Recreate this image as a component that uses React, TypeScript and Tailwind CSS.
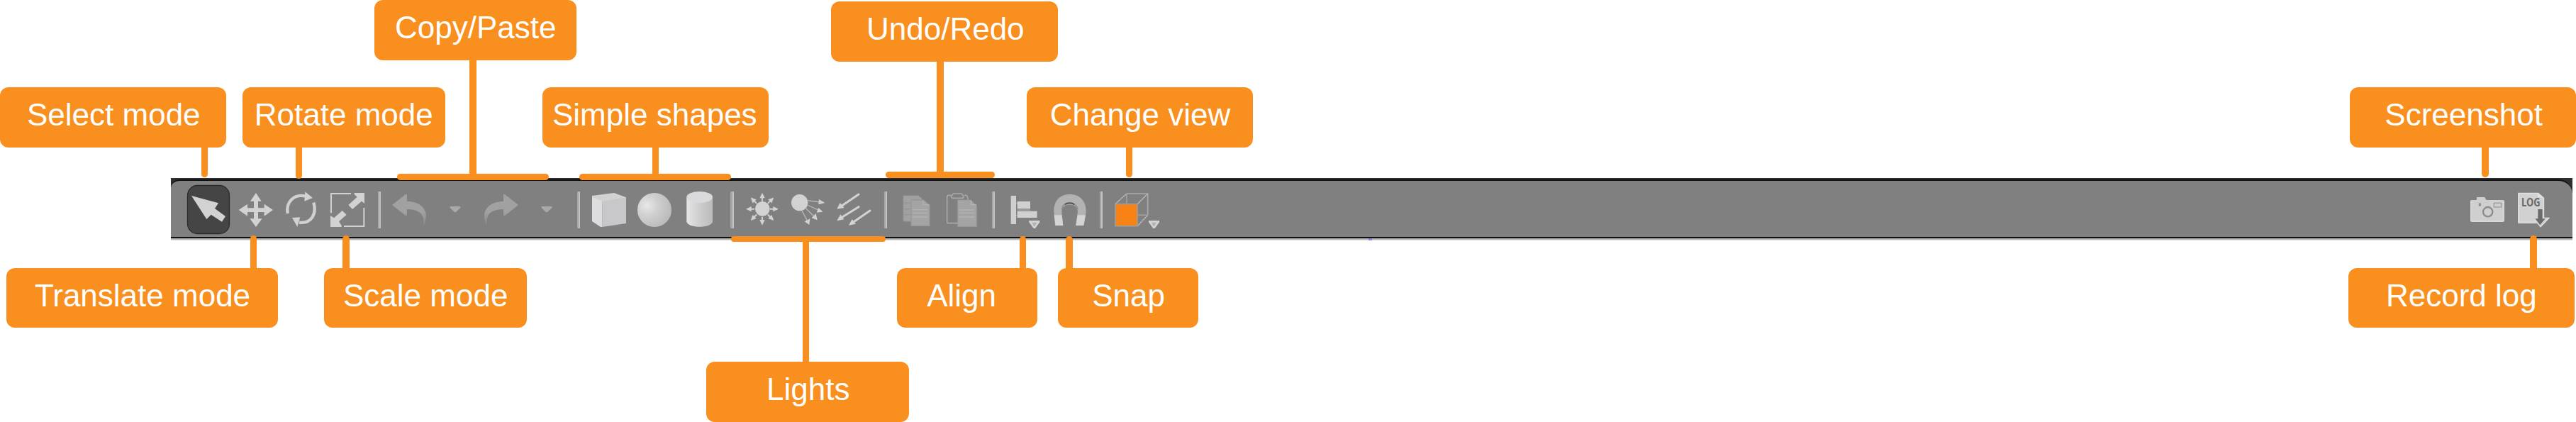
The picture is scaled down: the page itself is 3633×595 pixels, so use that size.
import type { ReactNode } from "react";

type IconProps = { box: string; className: string; children: ReactNode };

/* Every toolbar icon is drawn at three units per pixel, over the bar's full height. */
function Icon({ box, className, children }: IconProps) {
  return (
    <svg viewBox={box} className={`h-[79px] shrink-0 ${className}`} fill="none">
      {children}
    </svg>
  );
}

function Separator({ className }: { className: string }) {
  return <div className={`mt-[15px] h-[52px] shrink-0 border-l-2 border-[#a6a6a6] bg-[#c2c2c2] ${className}`} />;
}

function Caret({ className }: { className: string }) {
  return (
    <Icon box="342 60 48 237" className={`w-4 ${className}`}>
      <path d="M344 168H388V174L369 192H362L344 174Z" fill="#a9a9a9" />
    </Icon>
  );
}

function CornerArrow({ x = 0, y = 0 }: { x?: number; y?: number }) {
  return (
    <g transform={`translate(${x} ${y})`}>
      <path d="M0 0H45V7L26 33H19L0 7Z" fill="#d4d4d4" />
      <path d="M12 8H33L24 24H20Z" fill="#b2b2b2" />
    </g>
  );
}

const rays = [0, 45, 90, 135, 180, 225, 270, 315];

function Toolbar() {
  return (
    <div className="ml-[241px] w-[3387px]">
      <div className="bg-[#2c2e30] pt-[2px]">
        <div className="flex h-[83px] items-start rounded-tl-[12px] rounded-tr-[20px] border-y-2 border-[#111111] bg-[#808080] pl-[21px] pr-8">
          <Icon box="96 60 192 237" className="w-16">
            <rect x="103.500" y="79.500" width="177" height="204" rx="42" fill="#454545" stroke="#2b2b2b" strokeWidth="4" />
            <path d="M120 123L234 154L219 177L264 210L249 233L203 203L184 222Z" fill="#d2d2d2" />
          </Icon>
          <Icon box="318 60 150 237" className="ml-[10px] w-[50px]">
            <path
              d="M393 111L416 146H402V175H428V158L465 183L428 209V192H402V220H419L393 255L367 220H384V192H357V209L320 183L357 158V175H384V146H369Z"
              fill="#d2d2d2"
            />
          </Icon>
          <Icon box="510 60 144 237" className="ml-[14px] w-12">
            <path d="M527 198C519 150 552 114 604 125" stroke="#d0d0d0" strokeWidth="13" />
            <path d="M601 106L633 132L598 146Z" fill="#d2d2d2" />
            <path d="M637 152C650 198 630 242 576 236" stroke="#d0d0d0" strokeWidth="13" />
            <path d="M546 216L580 214L568 254Z" fill="#d2d2d2" />
          </Icon>
          <Icon box="702 60 156 237" className="ml-4 w-[52px]">
            <path d="M795 114H711V196M850 174V252H765" stroke="#d2d2d2" strokeWidth="6" />
            <path
              d="M708 255V207L723 217L758 186L776 203L744 232L755 249V255ZM852 111V156L840 146L801 180L784 162L821 128L809 117V111Z"
              fill="#d2d2d2"
            />
          </Icon>
          <Separator className="ml-[17px] w-1" />
          <Icon box="96 60 150 237" className="ml-[15px] w-[50px]">
            <defs>
              <linearGradient id="undoFade" x1="0" y1="0" x2="0" y2="1">
                <stop offset=".6" stopColor="#a1a1a1" />
                <stop offset="1" stopColor="#8b8b8b" />
              </linearGradient>
            </defs>
            <path d="M99 162L156 117H162V147C218 147 248 180 242 218L237 243H231C237 199 212 181 162 180V208H157Z" fill="url(#undoFade)" />
          </Icon>
          <Caret className="ml-8" />
          <Icon box="486 60 150 237" className="ml-8 w-[50px]">
            <path d="M633 162L576 117H570V147C514 147 484 180 490 218L495 243H500C495 199 520 181 570 180V208H575Z" fill="url(#undoFade)" />
          </Icon>
          <Caret className="ml-[31px]" />
          <Separator className="ml-[35px] w-1" />
          <Icon box="102 60 150 237" className="ml-4 w-[50px]">
            <path d="M105 123L198 111L249 130V138L148 151L105 132Z" fill="#d2d2d2" />
            <path d="M105 127L148 147V255H141L105 231Z" fill="#dddddf" />
            <path d="M148 146L249 130V240L148 255Z" fill="#c8c8ca" />
          </Icon>
          <Icon box="294 60 150 237" className="ml-[14px] w-[50px]">
            <defs>
              <radialGradient id="sphereShade" cx=".28" cy=".37" r=".68">
                <stop offset="0" stopColor="#e8e8e8" />
                <stop offset=".45" stopColor="#d0d0d0" />
                <stop offset="1" stopColor="#bdbdbd" />
              </radialGradient>
            </defs>
            <circle cx="369" cy="183" r="72" fill="url(#sphereShade)" />
          </Icon>
          <Icon box="501 60 117 237" className="ml-[19px] w-[39px]">
            <defs>
              <linearGradient id="cylinderShade">
                <stop offset="0" stopColor="#e6e6e6" />
                <stop offset=".6" stopColor="#c9c9c9" />
                <stop offset="1" stopColor="#bcbcbc" />
              </linearGradient>
            </defs>
            <path d="M505 130V232C508 262 612 262 615 232V130Z" fill="url(#cylinderShade)" />
            <ellipse cx="560" cy="129" rx="55" ry="24" fill="#dadadc" />
          </Icon>
          <Separator className="ml-6 w-[5px] border-l-3" />
          <Icon box="63 60 141 237" className="ml-4 w-[47px]">
            <circle cx="136" cy="178" r="31" fill="#d2d2d2" />
            {rays.map((a) => (
              <g key={a} transform={`translate(135 179) rotate(${a})`}>
                <path d="M0 -69L11 -46H3V-33H-3V-46H-11Z" fill="#d2d2d2" />
              </g>
            ))}
          </Icon>
          <Icon box="255 60 150 237" className="ml-[17px] w-[50px]">
            <circle cx="293" cy="152" r="35" fill="#d2d2d2" />
            <path d="M326 143L378 150M326 162L374 184M317 174L355 211M302 184L324 226" stroke="#b8b8b8" strokeWidth="4" />
            <path d="M375 138L400 153L373 160ZM373 174L392 191L365 194ZM362 198L368 226L344 217ZM337 220L334 246L314 232Z" fill="#d2d2d2" />
          </Icon>
          <Icon box="447 60 150 237" className="ml-[14px] w-[50px]">
            <path d="M543 117L469 167M543 170L469 216M591 186L520 235" stroke="#d2d2d2" strokeWidth="9" strokeLinecap="round" />
            <path d="M451 179L464 153L482 174ZM451 229L466 202L481 223ZM501 248L515 222L531 242Z" fill="#d2d2d2" />
          </Icon>
          <Separator className="ml-[18px] w-1" />
          <Icon box="729 60 120 237" className="ml-[22px] w-10">
            <path d="M732 123H795L810 135V231H732Z" fill="#a1a1a1" stroke="#969696" strokeWidth="3" />
            <path d="M736 154H760M736 179H760M736 203H760" stroke="#949494" strokeWidth="4" />
            <path d="M765 141H817L843 164V250H765Z" fill="#a4a4a4" stroke="#979797" strokeWidth="4" />
            <path d="M816 142V161H843" stroke="#b0b0b0" strokeWidth="4" />
            <path d="M770 182H835M770 196H835M770 213H835" stroke="#b2b2b2" strokeWidth="4" />
          </Icon>
          <Icon box="-18 60 135 237" className="ml-[21px] w-[45px]">
            <path d="M33 239H-7Q-13 239 -13 233V128Q-13 121 -7 121H4M61 121H67Q74 121 75 140" stroke="#a8a8a8" strokeWidth="5" />
            <path d="M14 114H48L58 125L54 133H8L4 125Z" stroke="#a8a8a8" strokeWidth="5" />
            <path d="M33 142H87L111 166V252H33Z" fill="#a4a4a4" stroke="#a0a0a0" strokeWidth="4" />
            <path d="M88 143V161H111" stroke="#b3b3b3" strokeWidth="4" />
            <path d="M38 183H103M38 196H103M38 213H103" stroke="#b3b3b3" strokeWidth="4" />
          </Icon>
          <Separator className="ml-5 w-1" />
          <Icon box="255 60 126 237" className="ml-[22px] w-[42px]">
            <rect x="257" y="123" width="22" height="120" fill="#cfcfcf" />
            <path d="M279 154H285M279 207H285M285 183H339" stroke="#a4a4a4" strokeWidth="5" />
            <rect x="284" y="147" width="55" height="31" fill="#d0d0d0" />
            <rect x="284" y="188" width="84" height="28" fill="#d0d0d0" />
            <CornerArrow x={334} y={228} />
          </Icon>
          <Icon box="435 60 144 237" className="ml-[18px] w-12">
            <path d="M444 249L439 190C438 143 465 117 506 117C550 117 576 146 575 192L566 249H532L540 190C537 151 474 151 472 190L478 249Z" fill="#b2b2b2" />
            <path d="M440 205H472L478 249H446ZM539 205H573L564 249H532Z" fill="#d4d4d4" />
            <path d="M485 160C496 152 515 152 526 160" stroke="#4f4f4f" strokeWidth="6" />
            <path d="M473 181Q475 164 485 160M526 160Q537 165 539 181" stroke="#8f8f8f" strokeWidth="6" />
          </Icon>
          <Separator className="ml-[18px] w-1" />
          <Icon box="696 60 192 237" className="ml-[17px] w-16">
            <path d="M747 114H836V205" stroke="#aaaaaa" strokeWidth="5" />
            <path d="M747 114V158M793 205H836" stroke="#9a9a9a" strokeWidth="6" />
            <path d="M793 158L836 114M793 251L836 205M700 157L747 114" stroke="#9c9c9c" strokeWidth="5" />
            <path d="M793 158L836 114M793 251L836 205M700 157L747 114" stroke="#c4c4c4" strokeWidth="4" strokeDasharray="5 4" />
            <rect x="699" y="158" width="93" height="93" fill="#f88314" stroke="#a39c96" strokeWidth="5" />
            <CornerArrow x={840} y={228} />
          </Icon>
          <Icon box="150 60 150 237" className="ml-auto w-[50px]">
            <path d="M159 141H179L181 129H213L221 141H291Q297 141 297 147V228Q297 234 291 234H159Q153 234 153 228V147Q153 141 159 141Z" fill="#cfcfcf" />
            <path d="M156 145V230M159 231H291M294 146V230" stroke="#dcdcdc" strokeWidth="4" />
            <circle cx="227" cy="191" r="20" stroke="#8b8b8b" strokeWidth="7" />
            <rect x="188" y="154" width="10" height="13" fill="#929292" />
            <rect x="253" y="154" width="31" height="17" stroke="#9c9c9c" strokeWidth="4" />
          </Icon>
          <Icon box="351 60 138 237" className="ml-[17px] w-[46px]">
            <path d="M354 111H441L465 131V242H354Z" fill="#a3a3a3" />
            <path d="M357 113H440L463 133V235H357Z" fill="#d1d1d1" stroke="#e0e0e0" strokeWidth="5" />
            <path d="M438 113V130H461Z" fill="#e2e2e2" />
            <text
              x="369"
              y="167"
              fontFamily="Noto Sans, sans-serif"
              fontWeight="700"
              fontSize="48"
              textLength="80"
              lengthAdjust="spacingAndGlyphs"
              fill="#6a6a6a"
            >
              LOG
            </text>
            <path d="M426 222H440M458 217H486L450 254L426 224" fill="#d1d1d1" stroke="#dedede" strokeWidth="4" />
            <path d="M439 180H458V220H470L448 247L427 220H439Z" fill="#6c6c6c" />
          </Icon>
        </div>
      </div>
      <div className="h-[3px] border-b border-[#dcdcdc] bg-[#b5b5b5] pl-[1689px]">
        <div className="h-[3px] w-[5px] bg-[#8a88e0]" />
      </div>
    </div>
  );
}

type Callout = { text: string; place: string };

const callouts: Callout[] = [
  { text: "Copy/Paste", place: "left-[528px] top-0 h-[84.500px] w-[285px] pl-[29px]" },
  { text: "Undo/Redo", place: "left-[1172.300px] top-[2px] h-[84.600px] w-[319.700px] pl-[49.700px]" },
  { text: "Select mode", place: "left-0 top-[122.500px] h-[85px] w-[319px] pl-[38px]" },
  { text: "Rotate mode", place: "left-[342px] top-[122.500px] h-[85px] w-[285.500px] pl-[16.800px]" },
  { text: "Simple shapes", place: "left-[765px] top-[122.500px] h-[85px] w-[319px] pl-[14px]" },
  { text: "Change view", place: "left-[1447.500px] top-[122.500px] h-[85px] w-[319.500px] pl-[33.300px]" },
  { text: "Screenshot", place: "left-[3314.300px] top-[122.500px] h-[85px] w-[318.700px] pl-[49px]" },
  { text: "Translate mode", place: "left-[8.500px] top-[377.600px] h-[84.800px] w-[383.300px] pl-[40.500px]" },
  { text: "Scale mode", place: "left-[457px] top-[377.600px] h-[84.800px] w-[285.500px] pl-[27px]" },
  { text: "Align", place: "left-[1265.200px] top-[377.600px] h-[84.800px] w-[197.500px] pl-[42px]" },
  { text: "Snap", place: "left-[1492.200px] top-[377.600px] h-[84.800px] w-[197.500px] pl-[48px]" },
  { text: "Record log", place: "left-[3311.700px] top-[377.600px] h-[84.800px] w-[319px] pl-[53.300px]" },
  { text: "Lights", place: "left-[996px] top-[510px] h-[84.500px] w-[285.700px] pl-[85px]" },
];

const connectors: string[] = [
  "left-[283.500px] top-[200px] h-[50px] w-[9.500px]",
  "left-[417px] top-[200px] h-[52.300px] w-[9.300px]",
  "left-[353px] top-[332px] h-[52px] w-[9.300px]",
  "left-[483px] top-[332px] h-[52px] w-[9.500px]",
  "left-[662.300px] top-[78px] h-[172px] w-[9.500px]",
  "left-[560px] top-[245px] h-[9px] w-[214px]",
  "left-[919.500px] top-[200px] h-[50px] w-[9.500px]",
  "left-[817px] top-[245px] h-[9px] w-[214.300px]",
  "left-[1131.500px] top-[336px] h-[180px] w-[9.500px]",
  "left-[1031px] top-[333px] h-[8.300px] w-[217.700px]",
  "left-[1321px] top-[80px] h-[170.500px] w-[9.500px]",
  "left-[1248.700px] top-[242px] h-[8.500px] w-[154.300px]",
  "left-[1437.700px] top-[333px] h-[54px] w-[9.500px]",
  "left-[1503.200px] top-[333px] h-[54px] w-[9.600px]",
  "left-[1587.500px] top-[200px] h-[50.300px] w-[9.500px]",
  "left-[3500px] top-[200px] h-[50.300px] w-[9.600px]",
  "left-[3568px] top-[332px] h-[54px] w-[9.500px]",
];

export default function App() {
  return (
    <main className="relative h-[595px] w-[3633px] overflow-hidden bg-white pt-[251px] font-['Liberation_Sans',Arial,sans-serif]">
      <Toolbar />
      {connectors.map((place) => (
        <div key={place} className={`absolute rounded-full bg-[#f88f1e] ${place}`} />
      ))}
      {callouts.map(({ text, place }) => (
        <div
          key={text}
          className={`absolute rounded-[12px] bg-[#f88f1e] text-[44px] leading-[77px] whitespace-nowrap text-white ${place}`}
        >
          {text}
        </div>
      ))}
    </main>
  );
}
